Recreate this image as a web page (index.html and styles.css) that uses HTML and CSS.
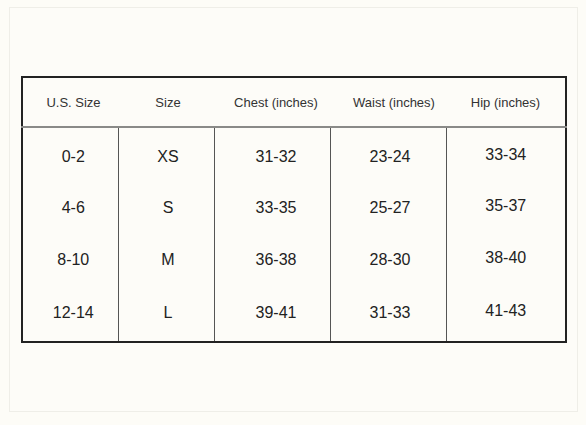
FILE: index.html
```html
<!DOCTYPE html>
<html>
<head>
<meta charset="utf-8">
<link rel="stylesheet" href="styles.css">
</head>
<body>
<div class="card">
  <table class="sizes">
    <colgroup>
      <col class="w1"><col class="w2"><col class="w3"><col class="w4"><col class="w5">
    </colgroup>
    <thead>
      <tr>
        <th class="c1">U.S. Size</th>
        <th class="c2">Size</th>
        <th class="c3">Chest (inches)</th>
        <th class="c4">Waist (inches)</th>
        <th class="c5">Hip (inches)</th>
      </tr>
    </thead>
    <tbody>
      <tr class="first">
        <td class="c1">0-2</td><td class="c2">XS</td><td class="c3">31-32</td><td class="c4">23-24</td><td class="c5">33-34</td>
      </tr>
      <tr>
        <td class="c1">4-6</td><td class="c2">S</td><td class="c3">33-35</td><td class="c4">25-27</td><td class="c5">35-37</td>
      </tr>
      <tr>
        <td class="c1">8-10</td><td class="c2">M</td><td class="c3">36-38</td><td class="c4">28-30</td><td class="c5">38-40</td>
      </tr>
      <tr class="last">
        <td class="c1">12-14</td><td class="c2">L</td><td class="c3">39-41</td><td class="c4">31-33</td><td class="c5">41-43</td>
      </tr>
    </tbody>
  </table>
</div>
</body>
</html>
```
FILE: styles.css
```css
html, body {
  margin: 0;
  padding: 0;
  background: #fdfcf7;
}
body {
  font-family: "Liberation Sans", Arial, sans-serif;
  color: #222;
}
.card {
  margin: 7px 8px 0 9px;
  height: 405px;
  border: 1px solid #efeee8;
  background: #fdfcf8;
  box-sizing: border-box;
  padding: 68px 0 0 11px;
}
.sizes {
  border-collapse: collapse;
  table-layout: fixed;
  width: 544px;
  border: 2px solid #222;
}
.w1 { width: 96px; }
.w2 { width: 96px; }
.w3 { width: 116px; }
.w4 { width: 116px; }
.w5 { width: 120px; }
.sizes th,
.sizes td {
  box-sizing: border-box;
  padding: 0;
  text-align: center;
  vertical-align: middle;
}
.sizes th {
  height: 50px;
  font-weight: normal;
  font-size: 13px;
  color: #333;
  border-bottom: 2px solid #8a8a88;
}
.sizes td {
  height: 52px;
  font-size: 16px;
  border-left: 1px solid #555;
  color: #222;
}
.sizes td.c1 { border-left: none; }
.sizes tr.first td { height: 55px; padding-top: 3px; }
.sizes tr.last td { height: 56px; padding-bottom: 2px; }
.sizes td.c5 { padding-bottom: 4px; }
.sizes tr.first td.c5 { padding-bottom: 4px; }
.sizes tr.last td.c5 { padding-bottom: 6px; }
.c1 { padding-left: 6px !important; }
.c2 { padding-left: 4px !important; }
.c3 { padding-left: 8px !important; }
.c4 { padding-left: 4px !important; }
.sizes th.c4 { padding-left: 12px !important; }
```
